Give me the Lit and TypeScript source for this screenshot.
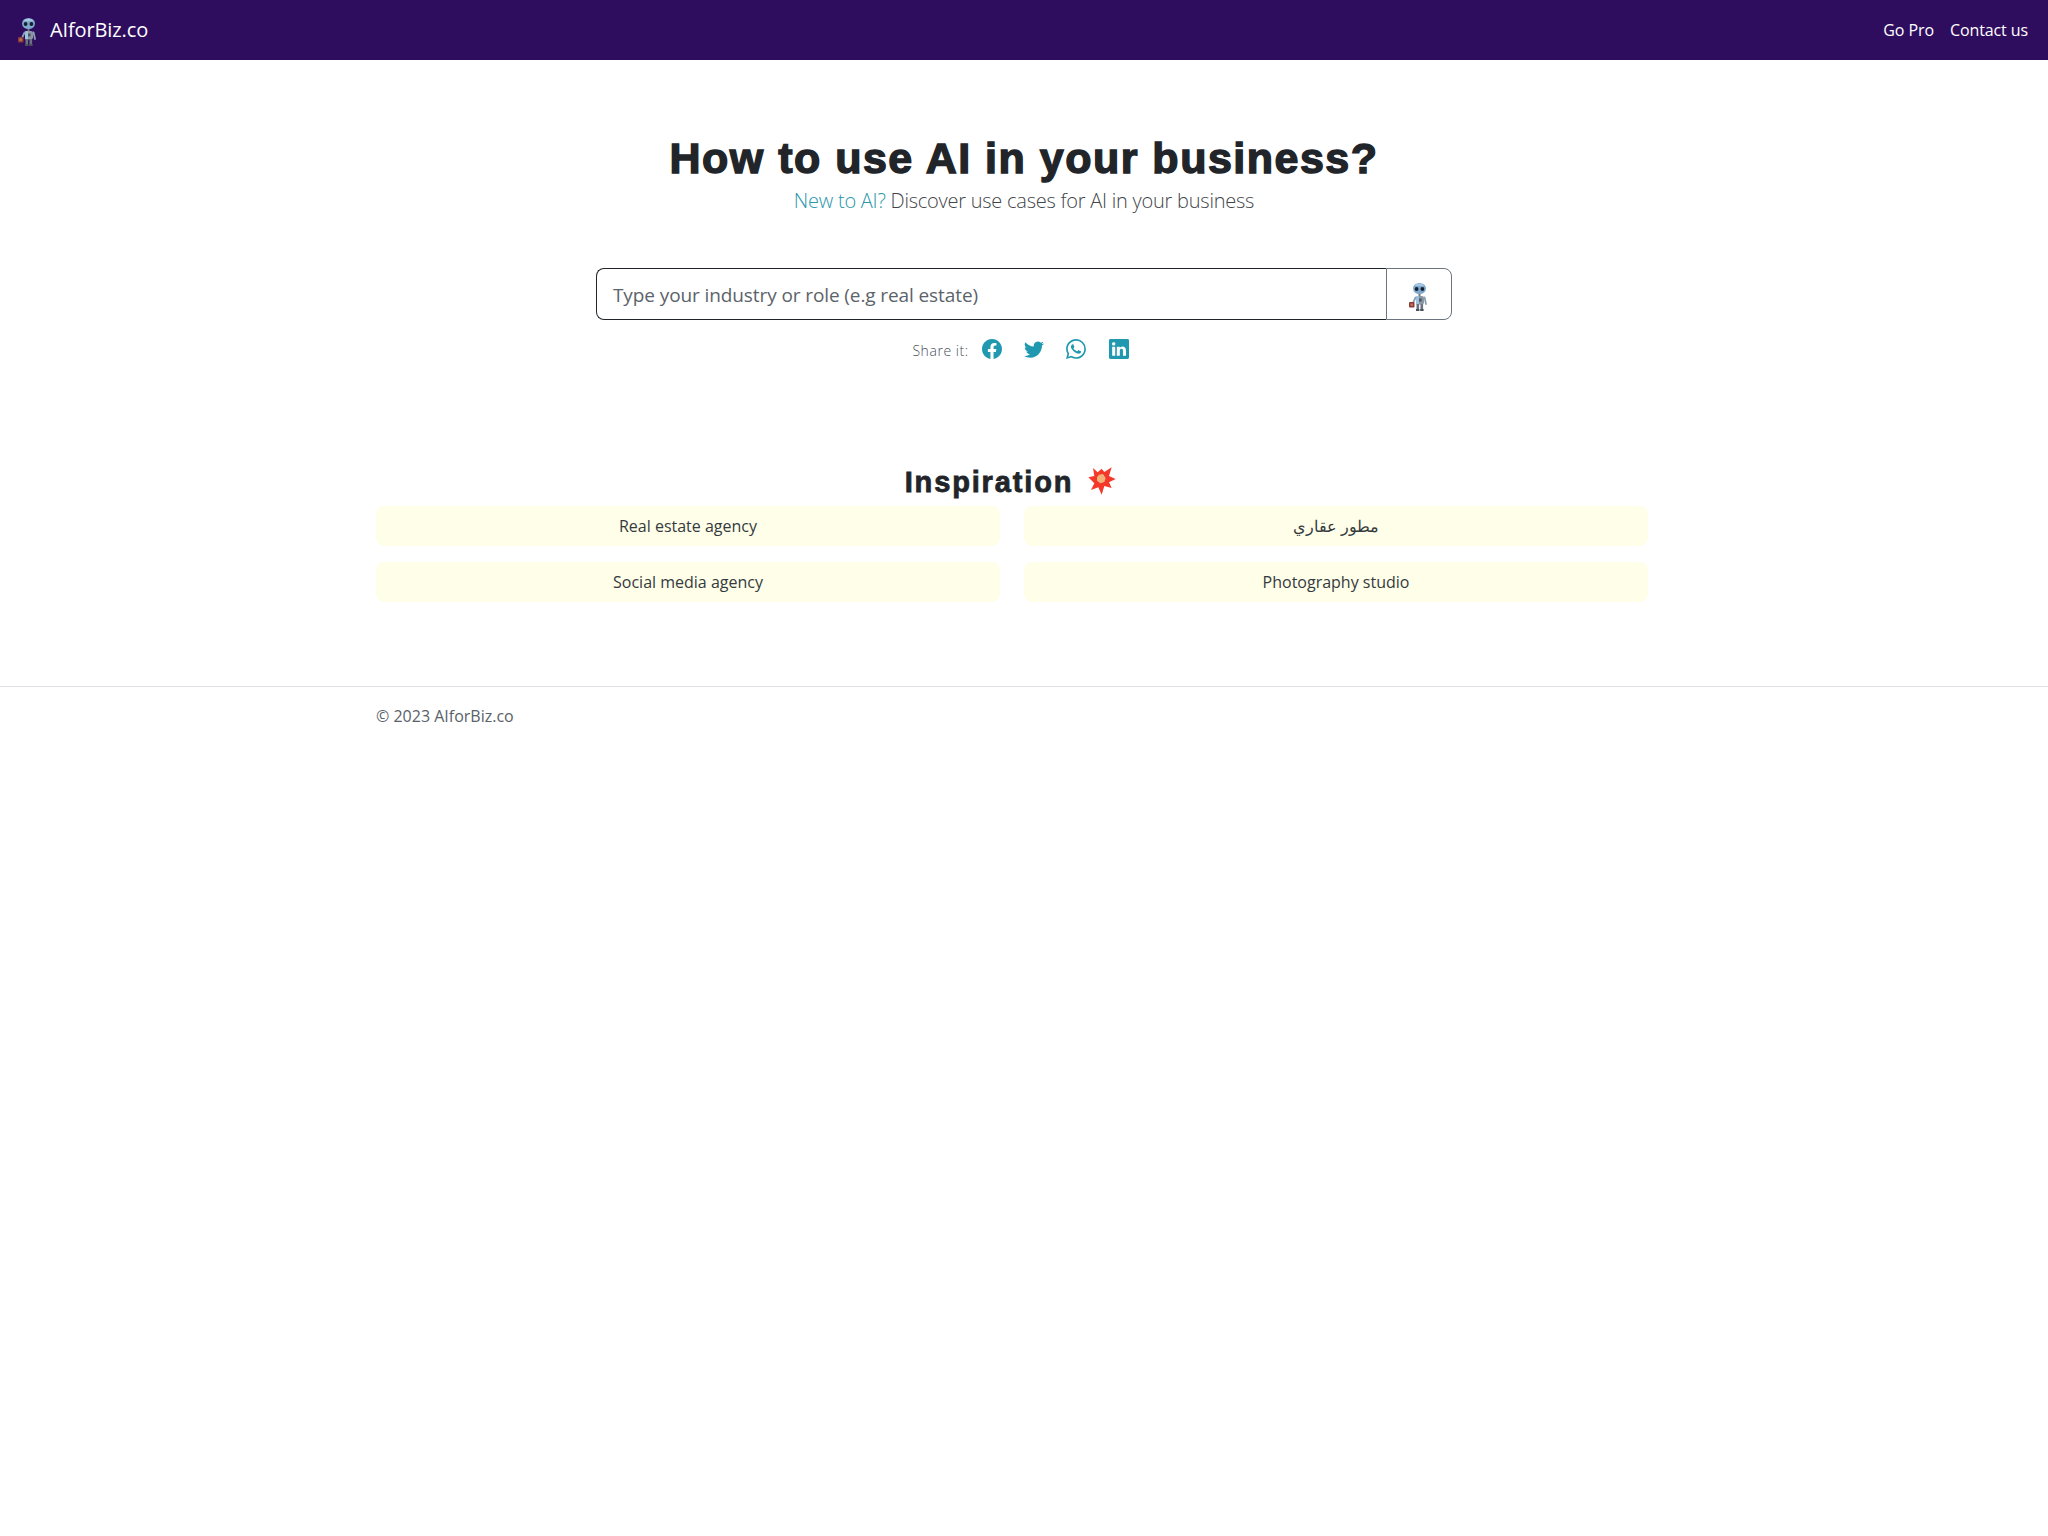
import { LitElement, html, css, svg } from "lit";
import { customElement } from "lit/decorators.js";

const robot = (cls: string) => html`<svg class=${cls} viewBox="0 0 30 34" aria-hidden="true">
  <rect x="14.5" y="14" width="2" height="3.5" fill="#6f7782"/>
  <ellipse cx="15.5" cy="9.5" rx="6.5" ry="5.6" fill="#7fa9cc"/>
  <path d="M10.5 7 A6 5 0 0 1 20.5 7 Z" fill="#a9c9e2"/>
  <circle cx="12.6" cy="10" r="1.9" fill="#172030"/>
  <circle cx="18.4" cy="10" r="1.9" fill="#172030"/>
  <rect x="12" y="17" width="8" height="8.5" rx="2" fill="#8d96a3"/>
  <rect x="12" y="17" width="3" height="8.5" rx="1.2" fill="#9cc3e0"/>
  <rect x="15" y="19.5" width="2.6" height="3" fill="#4c5563"/>
  <path d="M11.6 18.5 L9 24 M20.6 18.5 L22 25" stroke="#8ba0b4" stroke-width="1.8" stroke-linecap="round" fill="none"/>
  <rect x="12.5" y="25" width="2.6" height="5.5" fill="#6b7380"/>
  <rect x="16.5" y="25" width="2.6" height="5.5" fill="#6b7380"/>
  <rect x="12" y="30" width="3.4" height="2" fill="#4a515c"/>
  <rect x="16.2" y="30" width="3.4" height="2" fill="#4a515c"/>
  <rect x="5" y="23" width="5.5" height="5.5" rx="1" fill="#8a3b3b"/>
  <rect x="6.5" y="24.5" width="2.4" height="2.4" fill="#c9794e"/>
</svg>`;

const icons = [
  "M16 8.049c0-4.446-3.582-8.05-8-8.05C3.58 0-.002 3.603-.002 8.05c0 4.017 2.926 7.347 6.75 7.951v-5.625h-2.03V8.05H6.75V6.275c0-2.017 1.195-3.131 3.022-3.131.876 0 1.791.157 1.791.157v1.98h-1.009c-.993 0-1.303.621-1.303 1.258v1.51h2.218l-.354 2.326H9.25V16c3.824-.604 6.75-3.934 6.75-7.951z",
  "M5.026 15c6.038 0 9.341-5.003 9.341-9.334 0-.14 0-.282-.006-.422A6.685 6.685 0 0 0 16 3.542a6.658 6.658 0 0 1-1.889.518 3.301 3.301 0 0 0 1.447-1.817 6.533 6.533 0 0 1-2.087.793A3.286 3.286 0 0 0 7.875 6.03a9.325 9.325 0 0 1-6.767-3.429 3.289 3.289 0 0 0 1.018 4.382A3.323 3.323 0 0 1 .64 6.575v.045a3.288 3.288 0 0 0 2.632 3.218 3.203 3.203 0 0 1-.865.115 3.23 3.23 0 0 1-.614-.057 3.283 3.283 0 0 0 3.067 2.277A6.588 6.588 0 0 1 .78 13.58a6.32 6.32 0 0 1-.78-.045A9.344 9.344 0 0 0 5.026 15z",
  "M13.601 2.326A7.854 7.854 0 0 0 7.994 0C3.627 0 .068 3.558.064 7.926c0 1.399.366 2.76 1.057 3.965L0 16l4.204-1.102a7.933 7.933 0 0 0 3.79.965h.004c4.368 0 7.926-3.558 7.93-7.93A7.898 7.898 0 0 0 13.6 2.326zM7.994 14.521a6.573 6.573 0 0 1-3.356-.92l-.24-.144-2.494.654.666-2.433-.156-.251a6.56 6.56 0 0 1-1.007-3.505c0-3.626 2.957-6.584 6.591-6.584a6.56 6.56 0 0 1 4.66 1.931 6.557 6.557 0 0 1 1.928 4.66c-.004 3.639-2.961 6.592-6.592 6.592zm3.615-4.934c-.197-.099-1.17-.578-1.353-.646-.182-.065-.315-.099-.445.099-.133.197-.513.646-.627.775-.114.133-.232.148-.43.05-.197-.1-.836-.308-1.592-.985-.59-.525-.985-1.175-1.103-1.372-.114-.198-.011-.304.088-.403.087-.088.197-.232.296-.346.1-.114.133-.198.198-.33.065-.134.034-.248-.015-.347-.05-.099-.445-1.076-.612-1.47-.16-.389-.323-.335-.445-.34-.114-.007-.247-.007-.38-.007a.729.729 0 0 0-.529.247c-.182.198-.691.677-.691 1.654 0 .977.71 1.916.81 2.049.098.133 1.394 2.132 3.383 2.992.47.205.84.326 1.129.418.475.152.904.129 1.246.08.38-.058 1.171-.48 1.338-.943.164-.464.164-.86.114-.943-.049-.084-.182-.133-.38-.232z",
  "M0 1.146C0 .513.526 0 1.175 0h13.65C15.474 0 16 .513 16 1.146v13.708c0 .633-.526 1.146-1.175 1.146H1.175C.526 16 0 15.487 0 14.854V1.146zm4.943 12.248V6.169H2.542v7.225h2.401zm-1.2-8.212c.837 0 1.358-.554 1.358-1.248-.015-.709-.52-1.248-1.342-1.248-.822 0-1.359.54-1.359 1.248 0 .694.521 1.248 1.327 1.248h.016zm4.908 8.212V9.359c0-.216.016-.432.08-.586.173-.431.568-.878 1.232-.878.869 0 1.216.662 1.216 1.634v3.865h2.401V9.25c0-2.22-1.184-3.252-2.764-3.252-1.274 0-1.845.7-2.165 1.193v.025h-.016a5.54 5.54 0 0 1 .016-.025V6.169h-2.4c.03.678 0 7.225 0 7.225h2.4z",
];

const cards = ["Real estate agency", "مطور عقاري", "Social media agency", "Photography studio"];

@customElement("app-root")
export class AppRoot extends LitElement {
  static styles = css`
    :host { display: block; font-family: "Open Sans", "Noto Sans", sans-serif; color: #212529; background: #fff; min-height: 1536px; }
    * { box-sizing: border-box; }
    .nav { height: 60px; background: #2f0d5e; display: flex; align-items: center; justify-content: space-between; padding: 0 20px 0 13px; color: #fff; }
    .brand { display: flex; align-items: center; gap: 7px; font-size: 20px; letter-spacing: -0.12px; }
    .brand span { padding-bottom: 2px; }
    .brand-robot { width: 30px; height: 34px; margin-top: 2px; display: block; }
    .links { display: flex; gap: 16px; font-size: 16px; letter-spacing: -0.1px; }
    .hero { display: flex; flex-direction: column; align-items: center; }
    h1 { margin: 73px 0 0; font: 900 43px/50px "Liberation Sans", Arial, sans-serif; letter-spacing: 1.5px; -webkit-text-stroke: 1.4px #212529; }
    .sub { margin: 4px 0 0; font-size: 20px; line-height: 28px; font-weight: 300; letter-spacing: -0.24px; color: #3f4549; }
    .sub span { color: #2a97aa; }
    .search { display: flex; width: 856px; height: 52px; margin-top: 53px; }
    .field { flex: 1; border: 1px solid #212529; border-right: 0; border-radius: 8px 0 0 8px; display: flex; align-items: center; padding: 1px 16px 0; font-size: 19px; letter-spacing: -0.1px; color: #5c636a; }
    .go { width: 66px; border: 1px solid #6c757d; border-radius: 0 8px 8px 0; display: flex; align-items: center; justify-content: center; padding: 3px 0 0; }
    .go-robot { width: 30px; height: 34px; display: block; }
    .share { display: flex; align-items: center; height: 24px; margin-top: 17px; padding-right: 7px; }
    .share-label { font-size: 14px; font-weight: 300; letter-spacing: 0.55px; color: #495057; margin-right: 13px; padding-top: 2px; }
    .share svg { width: 20px; height: 20px; fill: #2098b0; display: block; margin-right: 22.3px; }
    .share svg:last-child { margin-right: 0; }
    .lower { margin-left: 376px; width: 1272px; }
    .insp-title { display: flex; align-items: center; justify-content: center; gap: 15px; margin: 98px 0 0; padding-right: 3px; height: 47px; font: 900 29px/47px "Liberation Sans", Arial, sans-serif; letter-spacing: 1.85px; -webkit-text-stroke: 0.8px #212529; }
    .burst { width: 28px; height: 29px; display: block; margin-bottom: 3px; }
    .grid { display: grid; grid-template-columns: 1fr 1fr; column-gap: 24px; row-gap: 16px; }
    .card { height: 40px; background: #fffee8; border-radius: 8px; display: flex; align-items: center; justify-content: center; font-size: 16px; color: #343a40; }
    footer { margin-top: 84px; border-top: 1px solid #dee2e6; padding: 17px 0 0 376px; font-size: 16px; color: #5a6168; line-height: 24px; }
  `;

  render() {
    return html`
      <nav class="nav">
        <div class="brand">${robot("brand-robot")}<span>AIforBiz.co</span></div>
        <div class="links"><span>Go Pro</span><span>Contact us</span></div>
      </nav>
      <main class="hero">
        <h1>How to use AI in your business?</h1>
        <p class="sub"><span>New to AI?</span> Discover use cases for AI in your business</p>
        <div class="search">
          <div class="field">Type your industry or role (e.g real estate)</div>
          <div class="go">${robot("go-robot")}</div>
        </div>
        <div class="share">
          <span class="share-label">Share it:</span>
          ${icons.map((d) => html`<svg viewBox="0 0 16 16" aria-hidden="true">${svg`<path d=${d}></path>`}</svg>`)}
        </div>
      </main>
      <section class="lower">
        <h2 class="insp-title">
          <span>Inspiration</span>
          <svg class="burst" viewBox="9 9 84 87" aria-hidden="true">
            <path d="M24 12 L38 25 L50 14 L58 24 L80 10 L72 36 L92 45 L72 55 L80 72 L58 66 L50 92 L40 70 L18 78 L28 58 L10 40 L28 36 Z" fill="#f4392b"/>
            <path d="M42 32 L54 30 L62 42 L58 54 L46 58 L36 50 L36 40 Z" fill="#f2b27a"/>
          </svg>
        </h2>
        <div class="grid">
          ${cards.map((c) => html`<div class="card">${c}</div>`)}
        </div>
      </section>
      <footer>© 2023 AIforBiz.co</footer>
    `;
  }
}
